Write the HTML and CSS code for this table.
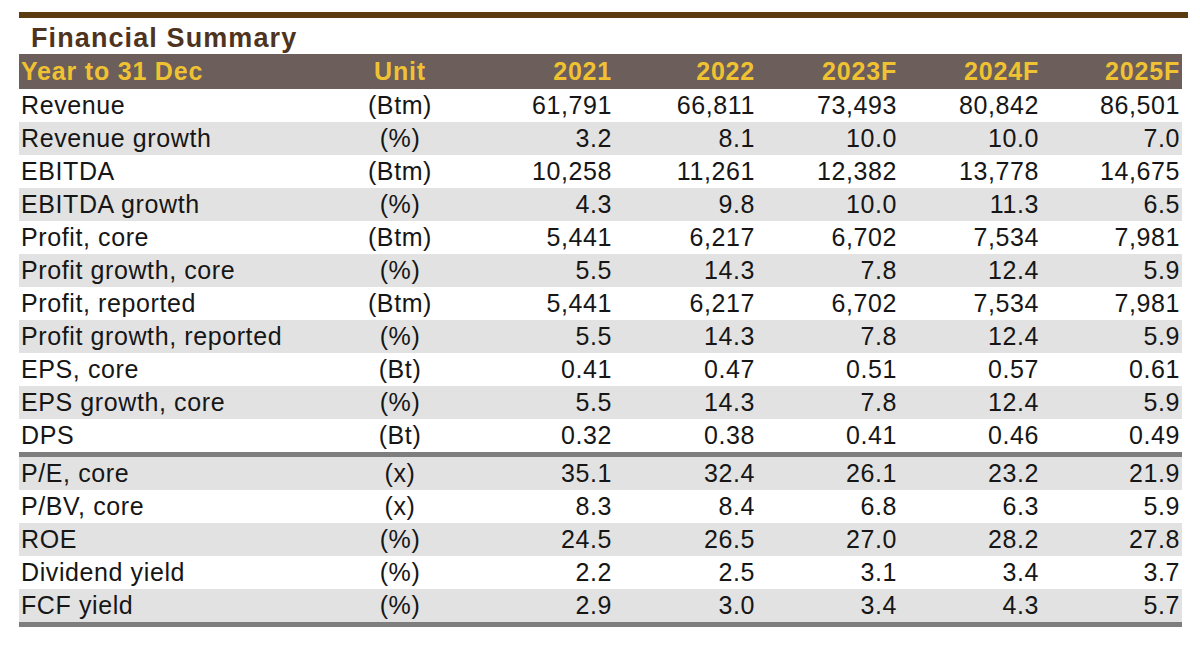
FILE: index.html
```html
<!DOCTYPE html>
<html>
<head>
<meta charset="utf-8">
<link rel="stylesheet" href="styles.css">
</head>
<body>
<div class="page">
  <div class="topbar"></div>
  <div class="title">Financial Summary</div>
  <div class="table">
    <div class="row head">
      <div class="lbl">Year to 31 Dec</div><div class="unit">Unit</div>
      <div class="num">2021</div><div class="num">2022</div><div class="num">2023F</div><div class="num">2024F</div><div class="num">2025F</div>
    </div>
    <div class="group">
      <div class="row"><div class="lbl">Revenue</div><div class="unit">(Btm)</div><div class="num">61,791</div><div class="num">66,811</div><div class="num">73,493</div><div class="num">80,842</div><div class="num">86,501</div></div>
      <div class="row alt"><div class="lbl">Revenue growth</div><div class="unit">(%)</div><div class="num">3.2</div><div class="num">8.1</div><div class="num">10.0</div><div class="num">10.0</div><div class="num">7.0</div></div>
      <div class="row"><div class="lbl">EBITDA</div><div class="unit">(Btm)</div><div class="num">10,258</div><div class="num">11,261</div><div class="num">12,382</div><div class="num">13,778</div><div class="num">14,675</div></div>
      <div class="row alt"><div class="lbl">EBITDA growth</div><div class="unit">(%)</div><div class="num">4.3</div><div class="num">9.8</div><div class="num">10.0</div><div class="num">11.3</div><div class="num">6.5</div></div>
      <div class="row"><div class="lbl">Profit, core</div><div class="unit">(Btm)</div><div class="num">5,441</div><div class="num">6,217</div><div class="num">6,702</div><div class="num">7,534</div><div class="num">7,981</div></div>
      <div class="row alt"><div class="lbl">Profit growth, core</div><div class="unit">(%)</div><div class="num">5.5</div><div class="num">14.3</div><div class="num">7.8</div><div class="num">12.4</div><div class="num">5.9</div></div>
      <div class="row"><div class="lbl">Profit, reported</div><div class="unit">(Btm)</div><div class="num">5,441</div><div class="num">6,217</div><div class="num">6,702</div><div class="num">7,534</div><div class="num">7,981</div></div>
      <div class="row alt"><div class="lbl">Profit growth, reported</div><div class="unit">(%)</div><div class="num">5.5</div><div class="num">14.3</div><div class="num">7.8</div><div class="num">12.4</div><div class="num">5.9</div></div>
      <div class="row"><div class="lbl">EPS, core</div><div class="unit">(Bt)</div><div class="num">0.41</div><div class="num">0.47</div><div class="num">0.51</div><div class="num">0.57</div><div class="num">0.61</div></div>
      <div class="row alt"><div class="lbl">EPS growth, core</div><div class="unit">(%)</div><div class="num">5.5</div><div class="num">14.3</div><div class="num">7.8</div><div class="num">12.4</div><div class="num">5.9</div></div>
      <div class="row"><div class="lbl">DPS</div><div class="unit">(Bt)</div><div class="num">0.32</div><div class="num">0.38</div><div class="num">0.41</div><div class="num">0.46</div><div class="num">0.49</div></div>
    </div>
    <div class="group">
      <div class="row alt"><div class="lbl">P/E, core</div><div class="unit">(x)</div><div class="num">35.1</div><div class="num">32.4</div><div class="num">26.1</div><div class="num">23.2</div><div class="num">21.9</div></div>
      <div class="row"><div class="lbl">P/BV, core</div><div class="unit">(x)</div><div class="num">8.3</div><div class="num">8.4</div><div class="num">6.8</div><div class="num">6.3</div><div class="num">5.9</div></div>
      <div class="row alt"><div class="lbl">ROE</div><div class="unit">(%)</div><div class="num">24.5</div><div class="num">26.5</div><div class="num">27.0</div><div class="num">28.2</div><div class="num">27.8</div></div>
      <div class="row"><div class="lbl">Dividend yield</div><div class="unit">(%)</div><div class="num">2.2</div><div class="num">2.5</div><div class="num">3.1</div><div class="num">3.4</div><div class="num">3.7</div></div>
      <div class="row alt"><div class="lbl">FCF yield</div><div class="unit">(%)</div><div class="num">2.9</div><div class="num">3.0</div><div class="num">3.4</div><div class="num">4.3</div><div class="num">5.7</div></div>
    </div>
  </div>
</div>
</body>
</html>
```
FILE: styles.css
```css
html, body {
  margin: 0;
  padding: 0;
  background: #ffffff;
}
.page {
  padding: 12px 0 0 19px;
  font-family: "Liberation Sans", Arial, sans-serif;
  color: #161616;
}
.topbar {
  width: 1169px;
  height: 6px;
  background: #5c3a12;
}
.title {
  height: 36px;
  box-sizing: border-box;
  padding: 5px 0 0 12px;
  font-size: 27px;
  line-height: 30px;
  font-weight: bold;
  letter-spacing: 1.1px;
  color: #4e3420;
}
.table {
  width: 1163px;
}
.row {
  display: grid;
  grid-template-columns: 321px 120px 154px 143px 142px 142px 141px;
  height: 33px;
  align-items: center;
  font-size: 25px;
  letter-spacing: 0.6px;
  background: #ffffff;
}
.row.alt {
  background: #e2e2e2;
}
.row.head {
  height: 35px;
  background: #6b5e5b;
  color: #f0c232;
  font-weight: bold;
  letter-spacing: 0.8px;
}
.group {
  border-bottom: 5px solid #7e7e7e;
}
.lbl {
  padding-left: 2px;
  white-space: nowrap;
}
.unit {
  text-align: center;
}
.num {
  text-align: right;
  padding-right: 2px;
}
```
